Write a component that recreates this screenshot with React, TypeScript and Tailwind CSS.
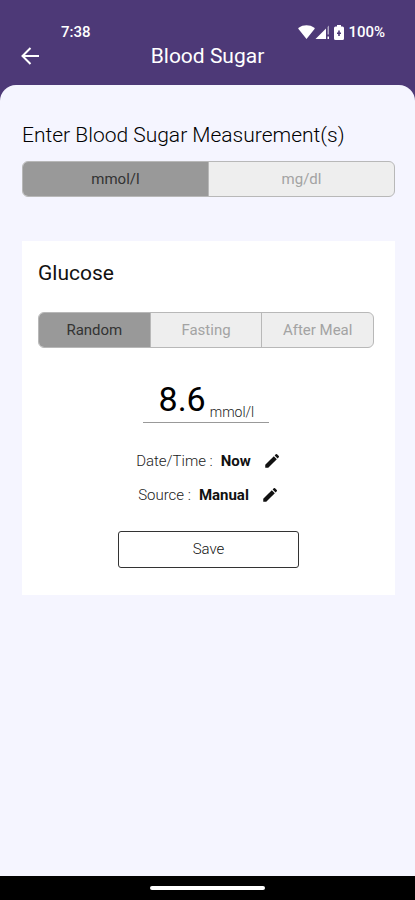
import { useState } from 'react'

type Option = { value: string; label: string }

type SegmentedProps = {
  name: string
  options: Option[]
  selected: string
  onSelect: (value: string) => void
}

const UNITS: Option[] = [
  { value: 'mmol', label: 'mmol/l' },
  { value: 'mg', label: 'mg/dl' },
]

const CONTEXTS: Option[] = [
  { value: 'random', label: 'Random' },
  { value: 'fasting', label: 'Fasting' },
  { value: 'after-meal', label: 'After Meal' },
]

function Segmented({ name, options, selected, onSelect }: SegmentedProps) {
  return (
    <div
      role="group"
      aria-label={name}
      className="flex h-9 overflow-hidden rounded-md border border-[#b8b8b8] bg-[#eeeeee] text-[15px]"
    >
      {options.map((option, i) => (
        <button
          key={option.value}
          type="button"
          aria-pressed={option.value === selected}
          onClick={() => onSelect(option.value)}
          className={`flex-1 ${i > 0 ? 'border-l border-[#b8b8b8]' : ''} ${
            option.value === selected ? 'bg-[#999999] text-[#333333]' : 'text-[#a3a3a3]'
          }`}
        >
          {option.label}
        </button>
      ))}
    </div>
  )
}

function StatusBar() {
  return (
    <div className="flex h-5 items-center justify-between pr-[30px] pl-[61px] text-[15px] leading-5 font-medium">
      <span>7:38</span>
      <div className="flex items-center">
        <svg viewBox="0 0 17 14" className="h-[14px] w-[17px]" fill="currentColor" aria-hidden="true">
          <path d="M8.500 14 L0.500 4 Q0 3.300 0.700 2.800 C5 -0.500 12 -0.500 16.300 2.800 Q17 3.300 16.500 4 Z" />
        </svg>
        <svg viewBox="0 0 15 14" className="mr-1 h-[14px] w-[15px]" fill="currentColor" aria-hidden="true">
          <path d="M0.500 14 L11 3.500 V14 Z" />
          <path d="M12.500 2 L14 0.500 V9.500 H12.500 Z" opacity=".55" />
          <path d="M12.500 11.500 H14 V14 H12.500 Z" />
        </svg>
        <svg viewBox="0 0 10 15" className="mr-1 h-[15px] w-[10px]" fill="currentColor" aria-hidden="true">
          <path
            fillRule="evenodd"
            d="M3 0 H7 V1.500 H8.500 Q10 1.500 10 3 V13.500 Q10 15 8.500 15 H1.500 Q0 15 0 13.500 V3 Q0 1.500 1.500 1.500 H3 Z M4.200 5.500 V7.500 H3 V9 H4.200 V11 H5.800 V9 H7 V7.500 H5.800 V5.500 Z"
          />
        </svg>
        <span>100%</span>
      </div>
    </div>
  )
}

function PencilIcon() {
  return (
    <svg viewBox="0 0 24 24" className="size-[18px]" fill="currentColor" aria-hidden="true">
      <path d="M3 17v4h4L18.400 9.600l-4-4L3 17z" />
      <path d="M21 7a1.200 1.200 0 0 0 0-1.700L18.700 3a1.200 1.200 0 0 0-1.700 0l-1.500 1.500 4 4L21 7z" />
    </svg>
  )
}

function EditableRow({ label, value }: { label: string; value: string }) {
  return (
    <div className="flex h-[34px] items-center justify-center text-[15px]">
      <span className="font-light text-[#222222]">{label} :</span>
      <span className="ml-2 font-bold">{value}</span>
      <button type="button" aria-label={`Edit ${label}`} className="ml-3">
        <PencilIcon />
      </button>
    </div>
  )
}

export default function App() {
  const [unit, setUnit] = useState('mmol')
  const [context, setContext] = useState('random')
  const [reading, setReading] = useState('8.6')

  return (
    <div className="flex min-h-screen flex-col bg-[#4d3977] font-[Roboto,sans-serif] text-[#111111]">
      <header className="pt-[22px] pb-[15px] text-white">
        <StatusBar />
        <div className="grid grid-cols-[40px_1fr_40px] items-center px-5">
          <button type="button" aria-label="Back" className="w-5">
            <svg
              viewBox="0 0 20 20"
              className="size-5"
              fill="none"
              stroke="currentColor"
              strokeWidth="2"
              aria-hidden="true"
            >
              <path d="M19 10 H3 M10.500 2 L2.500 10 L10.500 18" />
            </svg>
          </button>
          <h1 className="text-center text-[21px] leading-7">Blood Sugar</h1>
        </div>
      </header>

      <main className="flex-1 rounded-t-2xl bg-[#f5f5ff] pt-9 pr-5 pl-[22px]">
        <h2 className="mb-3 text-[21px] leading-7 font-light text-black">Enter Blood Sugar Measurement(s)</h2>
        <Segmented name="Unit" options={UNITS} selected={unit} onSelect={setUnit} />

        <section className="mt-11 bg-white px-4 pt-[18px] pb-[27px]">
          <h3 className="mb-[25px] text-[21px] leading-7">Glucose</h3>
          <div className="mr-[5px]">
            <Segmented name="Reading type" options={CONTEXTS} selected={context} onSelect={setContext} />

            <div className="mx-auto mt-7 mb-[21px] flex w-[126px] items-end justify-center gap-1 border-b border-[#999999]">
              <input
                type="text"
                inputMode="decimal"
                aria-label="Glucose reading"
                value={reading}
                onChange={(e) => setReading(e.target.value)}
                className="w-12 bg-transparent text-right text-[34px] leading-[46px] text-black outline-none"
              />
              <span className="text-sm font-light text-[#222222]">
                {unit === 'mmol' ? 'mmol/l' : 'mg/dl'}
              </span>
            </div>
          </div>

          <EditableRow label="Date/Time" value="Now" />
          <EditableRow label="Source" value="Manual" />

          <button
            type="button"
            className="mx-auto mt-[19px] block h-[37px] w-[181px] rounded-[3px] border border-[#333333] text-[15px] font-light"
          >
            Save
          </button>
        </section>
      </main>

      <footer className="flex h-6 items-center justify-center bg-black">
        <div className="h-1 w-[115px] rounded-full bg-white" />
      </footer>
    </div>
  )
}
